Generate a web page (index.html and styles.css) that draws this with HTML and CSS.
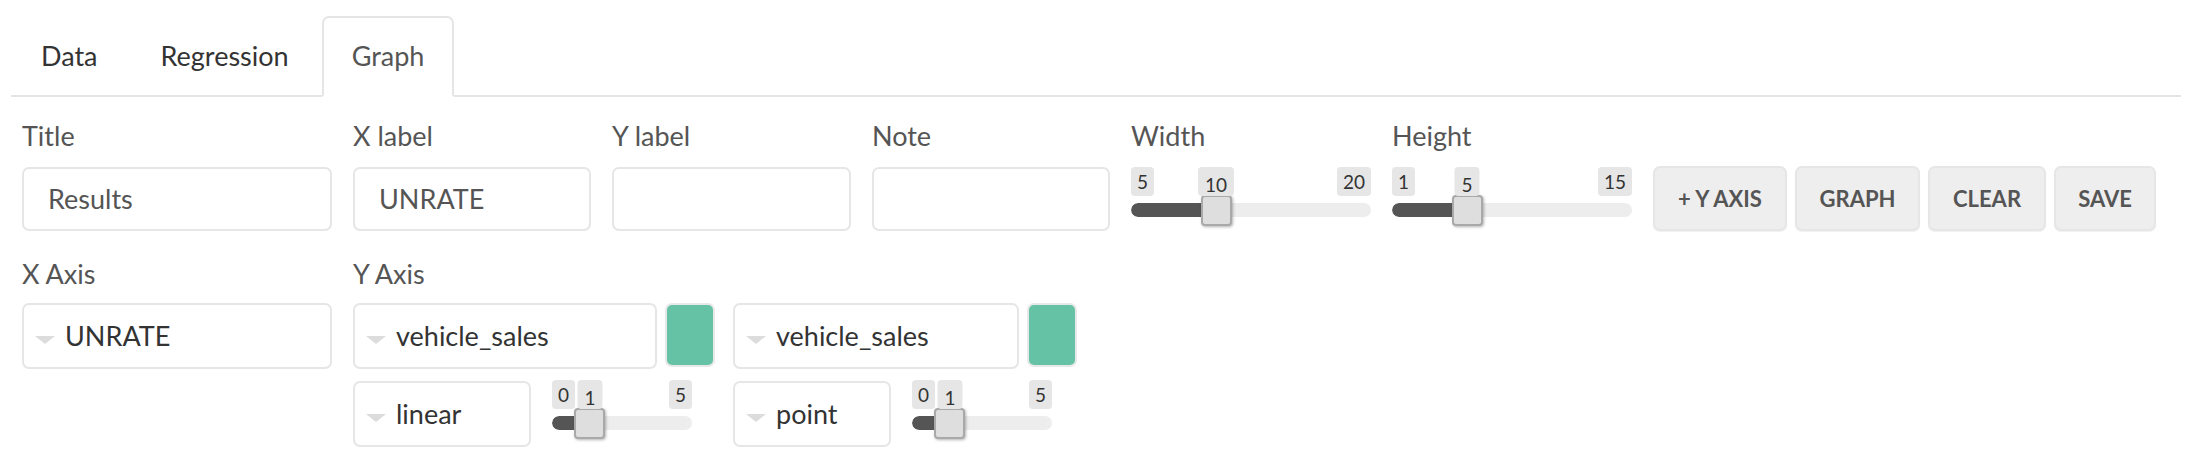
FILE: index.html
```html
<!DOCTYPE html>
<html>
<head>
<meta charset="utf-8">
<link rel="stylesheet" href="styles.css">
</head>
<body>
<div class="tabs">
  <div class="tab">Data</div>
  <div class="tab">Regression</div>
  <div class="tab active">Graph</div>
</div>
<div class="panel">
  <div class="row row1">
    <div class="field c-title">
      <div class="label">Title</div>
      <div class="input">Results</div>
    </div>
    <div class="field c-mid">
      <div class="label">X label</div>
      <div class="input">UNRATE</div>
    </div>
    <div class="field c-mid2">
      <div class="label">Y label</div>
      <div class="input"></div>
    </div>
    <div class="field c-mid">
      <div class="label">Note</div>
      <div class="input"></div>
    </div>
    <div class="field c-slider">
      <div class="label">Width</div>
      <div class="slider">
        <div class="sl-labels"><span class="sl-tag">5</span><span class="sl-tag">20</span></div>
        <div class="sl-track"><div class="sl-fill" style="width:86px"></div></div>
        <div class="sl-handle" style="left:70px"></div>
        <span class="sl-tag sl-value" style="left:85px">10</span>
      </div>
    </div>
    <div class="field c-slider">
      <div class="label">Height</div>
      <div class="slider">
        <div class="sl-labels"><span class="sl-tag">1</span><span class="sl-tag">15</span></div>
        <div class="sl-track"><div class="sl-fill" style="width:76px"></div></div>
        <div class="sl-handle" style="left:60px"></div>
        <span class="sl-tag sl-value" style="left:75px">5</span>
      </div>
    </div>
    <div class="buttons">
      <div class="btn b-yaxis">+ Y AXIS</div>
      <div class="btn b-graph">GRAPH</div>
      <div class="btn b-clear">CLEAR</div>
      <div class="btn b-save">SAVE</div>
    </div>
  </div>

  <div class="row row2">
    <div class="field c-title">
      <div class="label">X Axis</div>
      <div class="select"><span class="caret"></span><span class="sel-text">UNRATE</span></div>
    </div>
    <div class="field">
      <div class="label">Y Axis</div>
      <div class="ygroups">
        <div class="ygroup">
          <div class="yline">
            <div class="select s-var1"><span class="caret"></span><span class="sel-text">vehicle_sales</span></div>
            <div class="swatch"></div>
          </div>
          <div class="yline yline2">
            <div class="select s-type1"><span class="caret"></span><span class="sel-text">linear</span></div>
            <div class="slider mini">
              <div class="sl-labels"><span class="sl-tag">0</span><span class="sl-tag">5</span></div>
              <div class="sl-track"><div class="sl-fill" style="width:38px"></div></div>
              <div class="sl-handle" style="left:22px"></div>
              <span class="sl-tag sl-value" style="left:38px">1</span>
            </div>
          </div>
        </div>
        <div class="ygroup">
          <div class="yline">
            <div class="select s-var2"><span class="caret"></span><span class="sel-text">vehicle_sales</span></div>
            <div class="swatch"></div>
          </div>
          <div class="yline yline2">
            <div class="select s-type2"><span class="caret"></span><span class="sel-text">point</span></div>
            <div class="slider mini">
              <div class="sl-labels"><span class="sl-tag">0</span><span class="sl-tag">5</span></div>
              <div class="sl-track"><div class="sl-fill" style="width:38px"></div></div>
              <div class="sl-handle" style="left:22px"></div>
              <span class="sl-tag sl-value" style="left:38px">1</span>
            </div>
          </div>
        </div>
      </div>
    </div>
  </div>
</div>
</body>
</html>
```

FILE: styles.css
```css
* { box-sizing: border-box; }

body {
  margin: 0;
  background: #fff;
  font-family: Lato, "Open Sans", sans-serif;
  font-size: 27px;
  color: #333;
}

/* tabs */
.tabs {
  display: flex;
  margin: 16px 11px 0 11px;
  border-bottom: 2px solid #e5e5e5;
}
.tab {
  padding: 18px 28px 19px;
  line-height: 40px;
  border: 2px solid transparent;
  border-radius: 7px 7px 0 0;
  margin-right: 3px;
  margin-bottom: -2px;
  color: #333;
}
.tab.active {
  border-color: #e5e5e5;
  border-bottom-color: #fff;
  background: #fff;
  color: #555;
}

/* panel */
.panel {
  padding: 19px 0 0 22px;
}
.row {
  display: flex;
  align-items: flex-start;
  gap: 21px;
}
.row2 {
  margin-top: 23px;
}
.field {
  display: flex;
  flex-direction: column;
}
.label {
  line-height: 40px;
  color: #555;
  margin-bottom: 11px;
}
.row2 .label {
  margin-bottom: 9px;
}
.c-title { width: 310px; }
.c-mid { width: 238px; }
.c-mid2 { width: 239px; }
.c-slider { width: 240px; }

.input {
  height: 64px;
  border: 2px solid #e6e6e6;
  border-radius: 7px;
  padding: 0 24px;
  line-height: 60px;
  color: #555;
  background: #fff;
}

/* selects */
.select {
  height: 66px;
  border: 2px solid #e6e6e6;
  border-radius: 7px;
  background: #fff;
  display: flex;
  align-items: center;
  padding-left: 11px;
  color: #333;
}
.caret {
  width: 0;
  height: 0;
  border-left: 10px solid transparent;
  border-right: 10px solid transparent;
  border-top: 8px solid #dcdcdc;
  margin-top: 7px;
  margin-right: 10px;
}
.sel-text { line-height: 40px; }

.ygroups {
  display: flex;
  gap: 18px;
}
.ygroup {
  display: flex;
  flex-direction: column;
  gap: 12px;
}
.yline {
  display: flex;
  align-items: flex-start;
  gap: 8px;
}
.yline2 { gap: 21px; }
.s-var1 { width: 304px; }
.s-var2 { width: 286px; }
.s-type1 { width: 178px; }
.s-type2 { width: 158px; }

.swatch {
  width: 50px;
  height: 64px;
  background: #66c2a5;
  border: 2px solid #e8e8e8;
  border-radius: 7px;
}

/* sliders */
.slider {
  position: relative;
  width: 240px;
  height: 59px;
}
.slider.mini {
  width: 140px;
  margin-top: -1px;
}
.sl-labels {
  display: flex;
  justify-content: space-between;
  height: 29px;
}
.sl-tag {
  display: inline-block;
  height: 29px;
  line-height: 29px;
  padding: 0 6px;
  font-size: 19px;
  color: #333;
  background: #e6e6e6;
  border-radius: 4px;
}
.sl-value {
  position: absolute;
  top: 0;
  transform: translateX(-50%);
  padding: 3px 7px 0;
}
.sl-track {
  margin-top: 7px;
  height: 14px;
  border-radius: 7px;
  background: #ededed;
  overflow: hidden;
}
.sl-fill {
  height: 100%;
  background: #555;
  border-radius: 7px 0 0 7px;
}
.sl-handle {
  position: absolute;
  top: 28px;
  width: 31px;
  height: 31px;
  background: #dedede;
  border: 2px solid #a9a9a9;
  border-radius: 4px;
  box-shadow: 1px 1px 3px rgba(0, 0, 0, 0.3);
}

/* buttons */
.buttons {
  display: flex;
  gap: 7px;
  margin-top: 50px;
}
.btn {
  height: 65px;
  line-height: 61px;
  text-align: center;
  font-size: 22px;
  font-weight: 700;
  color: #555;
  background: #eeeeee;
  border: 2px solid #e6e6e6;
  border-radius: 7px;
  box-shadow: 0 1px 1px rgba(0, 0, 0, 0.06);
}
.b-yaxis { width: 134px; }
.b-graph { width: 125px; margin-left: 1px; }
.b-clear { width: 118px; margin-left: 1px; }
.b-save { width: 102px; margin-left: 1px; }
```
